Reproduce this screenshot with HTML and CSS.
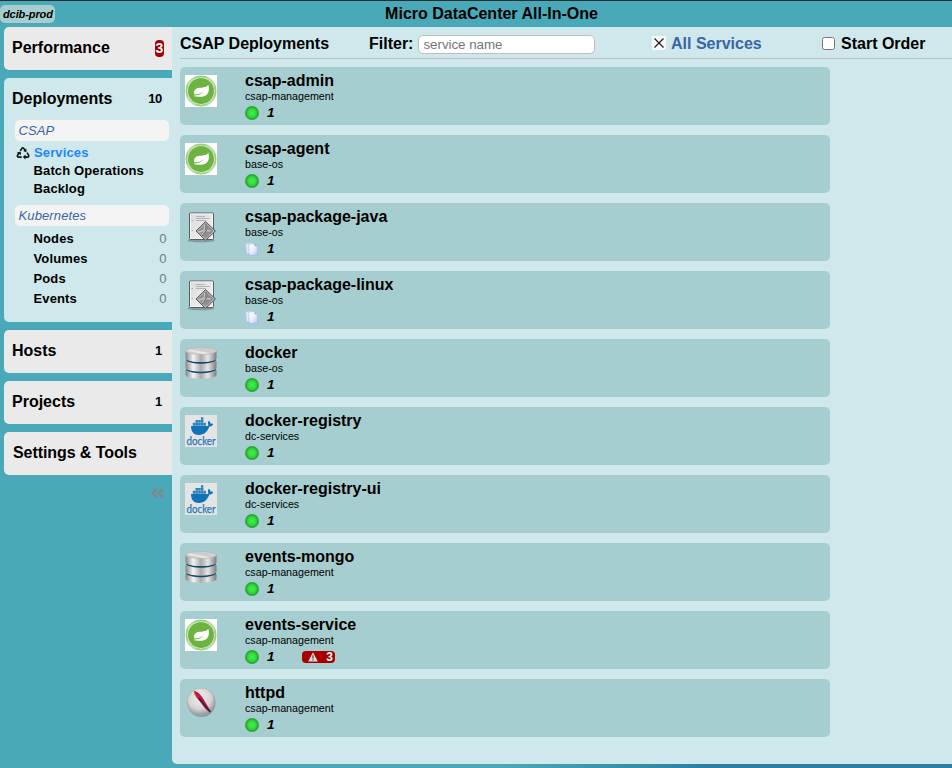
FILE: index.html
```
<!DOCTYPE html>
<html lang="en">
<head>
<meta charset="utf-8">
<title>Micro DataCenter All-In-One</title>
<link rel="stylesheet" href="styles.css">
</head>
<body>
<svg class="defs" aria-hidden="true">
  <defs>
    <radialGradient id="gDot"><stop offset="0" stop-color="#40ef4e"/><stop offset=".55" stop-color="#34dc3e"/><stop offset=".85" stop-color="#27aa30"/><stop offset="1" stop-color="#35a447"/></radialGradient>
    <linearGradient id="gMetal"><stop offset="0" stop-color="#858585"/><stop offset=".25" stop-color="#f4f4f4"/><stop offset=".5" stop-color="#a9a9a9"/><stop offset=".72" stop-color="#e6e6e6"/><stop offset="1" stop-color="#7c7c7c"/></linearGradient>
    <linearGradient id="gPage" x2="1" y2="1"><stop offset="0" stop-color="#fff"/><stop offset=".5" stop-color="#eef2ff"/><stop offset="1" stop-color="#a9bdf0"/></linearGradient>
    <linearGradient id="gPaper" x2="1" y2="1"><stop offset="0" stop-color="#d9d9d9"/><stop offset="1" stop-color="#f6f6f6"/></linearGradient>
    <radialGradient id="gBall" cx=".45" cy=".35" r=".7"><stop offset="0" stop-color="#f0f0f0"/><stop offset=".6" stop-color="#d4d4d4"/><stop offset="1" stop-color="#858585"/></radialGradient>
    <symbol id="spring" viewBox="0 0 32 32">
      <rect width="32" height="32" fill="#fff"/>
      <g fill="none" stroke="#6db33f" stroke-opacity=".5" stroke-width=".8"><ellipse cx="16" cy="16" rx="15.3" ry="14.2"/><ellipse cx="16" cy="16" rx="14.2" ry="15.3"/><ellipse cx="16" cy="16" rx="15.4" ry="13.6" transform="rotate(45 16 16)"/><ellipse cx="16" cy="16" rx="15.4" ry="13.6" transform="rotate(-45 16 16)"/></g>
      <circle cx="16" cy="16" r="13" fill="#6db33f"/>
      <path d="M23.300 9.800c1.200 4.500.8 8.700-2.500 10.700-3.200 1.800-6.500 1.200-9.600 1-1 .2-1.900-.1-2.100-.9 3 .2 6.800-1 10.200-4-3.400 2-6.700 3-9.900 3-1-3.200.4-5.800 4-6.500 3.500-.7 7.900-.3 9.900-3.300z" fill="#fff"/>
    </symbol>
    <symbol id="package" viewBox="0 0 32 32">
      <ellipse cx="16" cy="29.500" rx="13.500" ry="1.700" fill="#687b7b" opacity=".6"/>
      <rect x="4.500" y="2" width="24" height="26.500" rx=".8" fill="url(#gPaper)" stroke="#5c5c5c"/>
      <path d="M5.500 27.500v-24.500h22v24.500z" fill="none" stroke="#f5f5f5"/>
      <path d="M11 5.500h9M11 7.500h14M11 9.500h10" stroke="#b5b5b5"/>
      <path d="M6.500 9.500h1.300M6.500 19.500h1.300" stroke="#999"/>
      <path d="M20.500 10.500 30.500 20 20.500 29.500 11 20z" fill="#8e8e8e" stroke="#606060"/>
      <path d="M20.500 12 29 20 20.500 28 12.500 20z" fill="none" stroke="#bdbdbd"/>
      <path d="M13.500 21c5-1 7-2 6-7M17.500 24c1-5 4-5 8-4" fill="none" stroke="#c4c4c4" stroke-width="1.300"/>
      <path d="M21 13v7l-4 5" fill="none" stroke="#727272"/>
    </symbol>
    <symbol id="database" viewBox="0 0 32 32">
      <path d="M.5 23v5C2 33 30 33 31.500 28V23z" fill="url(#gMetal)"/>
      <path d="M1 21.500C5 25.500 27 25.500 31 21.500v1C27 27.500 5 27.500 1 22.500z" fill="#114b6d"/>
      <path d="M.5 14v7C2 25.500 30 25.500 31.500 21V14z" fill="url(#gMetal)"/>
      <path d="M1 12C5 16 27 16 31 12v1C27 18 5 18 1 13z" fill="#114b6d"/>
      <path d="M.5 4v7.500C2 16 30 16 31.500 11.500V4z" fill="url(#gMetal)"/>
      <ellipse cx="16" cy="4" rx="15.500" ry="3.500" fill="#cecece" stroke="#b0b0b0" stroke-width=".5"/>
      <path d="M5 2.300 25 6 19 7.200 2.500 4z" fill="#e5e5e5"/>
    </symbol>
    <symbol id="docker" viewBox="0 0 32 32">
      <rect width="32" height="32" fill="#e4e4e4"/>
      <path d="M6 11h15.500c1.800 0 2.200-.6 1.600-2-.4-1.300-.1-2.400.8-3.300 1.200.9 1.700 1.900 1.600 3 .9-.4 2-.3 2.800.3-.8 1.900-2.200 2.600-4 2.600C22.500 17 19 20 14 20 8.700 20 6.200 17 6 11z" fill="#1072b9"/>
      <path d="M7.800 7.800h2.500v3H7.800zM10.500 7.800H13v3h-2.500zM13.200 7.800h2.500v3h-2.500zM15.900 7.800h2.500v3h-2.500zM18.600 7.800h2.300v3h-2.300zM10.500 5H13v2.600h-2.500zM13.200 5h2.500v2.600h-2.500zM15.900 5h2.500v2.600h-2.500zM15.900 2.200h2.500v2.600h-2.500z" fill="#2d80b8"/>
      <text x="1.500" y="29.800" textLength="29" lengthAdjust="spacingAndGlyphs" font-family="Lato" font-size="10.500" fill="#2478b8" stroke="#2478b8" stroke-width=".25">docker</text>
    </symbol>
    <symbol id="feather" viewBox="0 0 32 32">
      <circle cx="16.500" cy="16" r="14" fill="#5c7373" opacity=".5"/>
      <circle cx="16" cy="14.800" r="13.700" fill="url(#gBall)" stroke="#aaa" stroke-width=".6"/>
      <path d="M9 4C12.500 4 16 8 18.500 12c2 4 5.500 8 7 13-4-1.500-6.500-4.500-9-8.500C13 12 9.500 9 9 4z" fill="#c01c3a"/>
      <path d="M14 11.500C18 15 20 20 25.500 25" stroke="#431a50" stroke-width="1.700" fill="none"/>
      <path d="M9 4.500C10 7.500 11 10 13 12" stroke="#d9605a" fill="none"/>
    </symbol>
    <symbol id="dot" viewBox="0 0 14 14"><circle cx="7" cy="7" r="7" fill="url(#gDot)"/></symbol>
    <symbol id="files" viewBox="0 0 14 14">
      <path d="M.5 1.500 8 .8v10L1.500 12z" fill="#dfe7fc" stroke="#b3c0e6" stroke-width=".6"/>
      <path d="M3.500 2.300 9.500 1.500 12 4l1 9.300H4.500z" fill="url(#gPage)" stroke="#9fb1e2" stroke-width=".5"/>
      <path d="M9.500 1.500v2.700H12z" fill="#8fa5df"/>
    </symbol>
  </defs>
</svg>
<div class="app">
  <header class="topbar">
    <span class="env">dcib-prod</span>
    <h1>Micro DataCenter All-In-One</h1>
  </header>
  <div class="body">
    <nav class="side">
      <div class="tab"><span>Performance</span><span class="alert">3</span></div>
      <div class="tab open">
        <div class="tab-head"><span>Deployments</span><span class="count">10</span></div>
        <div class="group">CSAP</div>
        <ul class="links">
          <li class="active"><svg class="recycle" viewBox="0 0 14 14"><g fill="none" stroke="#111" stroke-width="1.600"><path d="M4.300 4.700 6 2.200q.8-1 1.700 0l1.500 2.400"/><path d="M11.100 6.700l1.500 2.500q.5 1.700-1.200 1.900H8.500"/><path d="M5.700 11.100H2.500q-1.700-.2-.9-1.900L3.100 6.900"/></g><path d="M10.400 2.500v3.800L7.200 5.100zM9.500 8.600v4.900L6.800 11.100zM.7 6.800l3.900-1.300.5 3.600z" fill="#111"/></svg>Services</li>
          <li>Batch Operations</li>
          <li>Backlog</li>
        </ul>
        <div class="group">Kubernetes</div>
        <ul class="links kube">
          <li>Nodes<span>0</span></li>
          <li>Volumes<span>0</span></li>
          <li>Pods<span>0</span></li>
          <li>Events<span>0</span></li>
        </ul>
      </div>
      <div class="tab"><span>Hosts</span><span class="count">1</span></div>
      <div class="tab"><span>Projects</span><span class="count">1</span></div>
      <div class="tab tools"><span>Settings &amp; Tools</span></div>
      <svg class="collapse" viewBox="0 0 13 12"><path d="M6 1.500 1.500 6 6 10.500M12 1.500 7.500 6 12 10.500" fill="none" stroke="#858585" stroke-width="2.300"/></svg>
    </nav>
    <main>
      <div class="toolbar">
        <h2>CSAP Deployments</h2>
        <label class="filter">Filter:<input type="text" placeholder="service name"></label>
        <div class="all"><span class="clear"><svg viewBox="0 0 10 10"><path d="M.5.5l9 9M9.500.5l-9 9" stroke="#222" stroke-width="1.300"/></svg></span>All Services</div>
        <label class="order"><input type="checkbox">Start Order</label>
      </div>
      <div class="list">
        <article><svg class="logo"><use href="#spring"/></svg><div><h3>csap-admin</h3><p>csap-management</p><div class="stat"><svg><use href="#dot"/></svg><i>1</i></div></div></article>
        <article><svg class="logo"><use href="#spring"/></svg><div><h3>csap-agent</h3><p>base-os</p><div class="stat"><svg><use href="#dot"/></svg><i>1</i></div></div></article>
        <article><svg class="logo"><use href="#package"/></svg><div><h3>csap-package-java</h3><p>base-os</p><div class="stat"><svg><use href="#files"/></svg><i>1</i></div></div></article>
        <article><svg class="logo"><use href="#package"/></svg><div><h3>csap-package-linux</h3><p>base-os</p><div class="stat"><svg><use href="#files"/></svg><i>1</i></div></div></article>
        <article><svg class="logo"><use href="#database"/></svg><div><h3>docker</h3><p>base-os</p><div class="stat"><svg><use href="#dot"/></svg><i>1</i></div></div></article>
        <article><svg class="logo"><use href="#docker"/></svg><div><h3>docker-registry</h3><p>dc-services</p><div class="stat"><svg><use href="#dot"/></svg><i>1</i></div></div></article>
        <article><svg class="logo"><use href="#docker"/></svg><div><h3>docker-registry-ui</h3><p>dc-services</p><div class="stat"><svg><use href="#dot"/></svg><i>1</i></div></div></article>
        <article><svg class="logo"><use href="#database"/></svg><div><h3>events-mongo</h3><p>csap-management</p><div class="stat"><svg><use href="#dot"/></svg><i>1</i></div></div></article>
        <article><svg class="logo"><use href="#spring"/></svg><div><h3>events-service</h3><p>csap-management</p><div class="stat"><svg><use href="#dot"/></svg><i>1</i><b class="warn"><svg viewBox="0 0 10 10"><path d="M5 .3 9.800 9.500H.2z" fill="#e6dddd"/><path d="M5 3.200v3.300M5 7.300v1.200" stroke="#555" stroke-width="1.400"/></svg>3</b></div></div></article>
        <article><svg class="logo"><use href="#feather"/></svg><div><h3>httpd</h3><p>csap-management</p><div class="stat"><svg><use href="#dot"/></svg><i>1</i></div></div></article>
      </div>
    </main>
  </div>
  <div class="foot"></div>
</div>
</body>
</html>
```
FILE: styles.css
```
* { box-sizing: border-box; }
body { margin: 0; font-family: "Liberation Sans", Arial, sans-serif; color: #000; overflow: hidden; }
h1, h2, h3, p, ul { margin: 0; padding: 0; }
ul { list-style: none; }
.defs { position: absolute; width: 0; height: 0; }
.app { width: 952px; height: 768px; display: flex; flex-direction: column; background: #4aa9b8; border-top: 1px solid #292f31; }
.topbar { height: 26px; flex: none; display: grid; grid-template-columns: 173px 1fr 142px; }
.env { justify-self: start; margin-top: 4px; height: 18px; width: 55px; padding-left: 3px; border-radius: 5px; background: #a6cdcf; font: italic bold 11px/18px "Liberation Sans", sans-serif; letter-spacing: -.1px; }
.topbar h1 { font-size: 16px; line-height: 25px; text-align: center; }
.body { flex: 1; min-height: 0; display: flex; }
.side { width: 172px; flex: none; padding-left: 4px; display: flex; flex-direction: column; gap: 8px; }
.tab { height: 43px; flex: none; display: flex; justify-content: space-between; align-items: center; padding: 0 10px 2px 8px; border-radius: 5px 0 0 5px; background: #eaeaea; font-weight: bold; font-size: 16px; }
.tab.tools { padding-left: 9px; letter-spacing: -.08px; }
.count { font-size: 13px; letter-spacing: -.3px; }
.alert { width: 9px; height: 17px; border-radius: 4px; background: #a80000; color: #fff; font-size: 14px; line-height: 17px; text-align: center; margin-right: -2px; position: relative; top: 1px; }
.tab.open { height: 244px; display: block; padding: 0; background: #cee8eb; }
.tab-head { height: 42px; display: flex; justify-content: space-between; align-items: center; padding: 0 10px 1px 8px; }
.group { margin: 0 3px 0 11px; height: 21px; padding-left: 3.5px; border-radius: 5px; background: #f4f4f4; color: #3a65a8; font: italic 13px/21px "Liberation Sans", sans-serif; letter-spacing: .12px; }
.links { padding: 3px 5.5px 7px 29.5px; font-size: 13px; letter-spacing: .13px; }
.links li { height: 18px; line-height: 18px; display: flex; justify-content: space-between; position: relative; }
.links .active { color: #1e87ff; justify-content: flex-start; padding-left: .5px; }
.recycle { width: 14px; height: 14px; position: absolute; left: -18px; top: 2px; }
.links.kube li { height: 20px; line-height: 20px; }
.kube span { font-weight: normal; color: #708080; }
.collapse { width: 13px; height: 12px; align-self: flex-end; margin: 4px 8px 0 0; flex: none; }
main { flex: 1; min-width: 0; background: #cee8eb; border-radius: 0 0 0 5px; padding-left: 8px; }
.toolbar { height: 32px; border-bottom: 1px solid #bfbfc3; display: grid; grid-template-columns: 189px 283px 170px 1fr; align-items: start; font-weight: bold; font-size: 16px; line-height: 18px; }
h2 { font-size: 16px; line-height: 18px; margin-top: 8px; }
.filter, .all, .order { display: flex; align-items: flex-start; padding-top: 8px; }
.filter input { width: 177px; height: 19px; margin: 0 0 0 5px; padding: 0 4px; border: 1px solid #bdbdc0; border-radius: 5px; background: #fff; font: 13.333px "Liberation Sans", sans-serif; letter-spacing: -.03px; }
.filter input::placeholder { color: #757575; }
.all { color: #3a65a8; }
.clear { width: 14px; height: 14px; background: #f8f8f8; border-radius: 2px; display: flex; align-items: center; justify-content: center; margin: 1px 5px 0 0; }
.clear svg { width: 10px; height: 10px; }
.order input { margin: 2px 6px 0 0; width: 13px; height: 13px; }
.list { width: 650px; margin-top: 8px; display: flex; flex-direction: column; gap: 10px; }
article { height: 58px; border-radius: 5px; background: #a6cdcf; display: flex; padding: 4px 0 0 5px; }
.logo { width: 32px; height: 32px; margin: 4px 28px 0 0; flex: none; }
h3 { font-size: 16px; line-height: 18px; height: 18px; padding-top: 1px; }
article p { font-size: 10.72px; line-height: 15px; }
.stat { display: flex; height: 17px; align-items: center; }
.stat > svg { width: 14px; height: 14px; }
.stat i { font-size: 13.5px; font-weight: bold; width: 35px; margin-left: 8px; }
.warn { width: 33px; height: 12px; border-radius: 4px; background: #a80000; color: #fff; display: flex; align-items: center; justify-content: space-between; padding: 0 2px 0 6px; font-size: 12px; line-height: 12px; }
.warn svg { width: 10px; height: 10px; }
.foot { height: 4px; flex: none; background: linear-gradient(90deg, #4aa9b8 500px, #2a7fa0 710px); }
```
